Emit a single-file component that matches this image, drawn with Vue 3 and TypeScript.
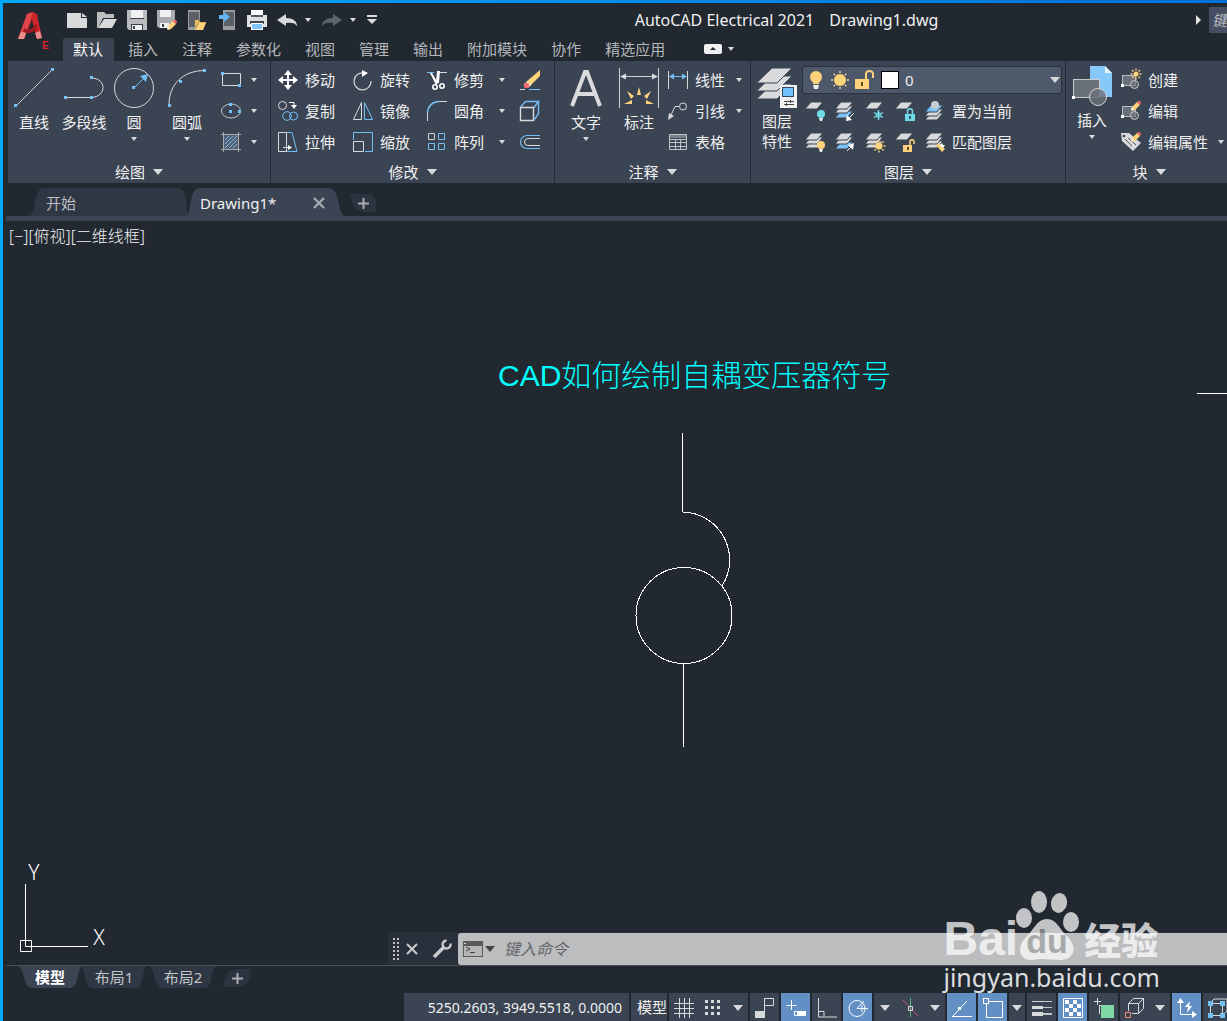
<script setup lang="ts">
import { h, ref } from 'vue'

const G = '#d9dadb'
const B = '#74bff5'
const Y = '#ffd27c'
const T = '#6fdbe6'
const P = '#3b4453'

const sheet = (y: number, fill = G) => `<path d="M6 ${y}h12l-6 7h-12z" fill="${fill}" stroke="${P}"/>`
const stack = sheet(9) + sheet(5) + sheet(1)
const line = (d: string, c = G, w = 1) => `<path d="${d}" fill="none" stroke="${c}" stroke-width="${w}"/>`
const fill = (d: string, c = G) => `<path d="${d}" fill="${c}"/>`
const dot = (x: number, y: number, c = B, s = 3) => `<rect x="${x}" y="${y}" width="${s}" height="${s}" fill="${c}"/>`
const ring = (x: number, y: number, r: number, c = G, f = 'none') => `<circle cx="${x}" cy="${y}" r="${r}" fill="${f}" stroke="${c}"/>`
const pencil = (x: number, y: number) =>
  `<g transform="translate(${x} ${y})">` + fill('M0 9l1-3 5-5 3 3-5 5-3 1z', Y) + fill('M6 1l1-1h2l1 2-1 2z', '#ee6a6a') + fill('M0 9l1-3 2 3z', '#f2f2f2') + '</g>'
const sun = (x: number, y: number, r: number, c = Y) =>
  `<g transform="translate(${x} ${y})"><circle r="${r}" fill="${c}"/>` +
  [0, 45, 90, 135, 180, 225, 270, 315].map(a => `<path d="M${r + 1} 0h2" stroke="${c}" stroke-width="1.4" transform="rotate(${a})"/>`).join('') + '</g>'
const blockShape = '<rect x="1.500" y="5.500" width="13" height="10" fill="#6a7079" stroke="#b9bbbe"/>' + '<circle cx="13.500" cy="14.500" r="4" fill="#6a7079aa" stroke="#c9cbcd"/>' + dot(0, 14, '#fff')

const icons: Record<string, [number, number, string]> = {
  file: [20, 20, fill('M0 3h14v5h6v10H0z') + fill('M15 3l5 4h-5z')],
  open: [20, 20, fill('M0 2h7l2 2h8v4H6L1 18H0z', '#bcbec0') + fill('M7 9h13l-5 9H1z')],
  save: [20, 20, fill('M0 0h20v20H2l-2-2z', '#b9bbbd') + fill('M4 0h12v8H4z', '#f0f0f0') + fill('M3 8h14v1H3zM4 14h12v6H4z', '#3a4049') + fill('M5 15h10v5H5z', '#f0f0f0') + fill('M6 16h2v3H6z', '#3a4049')],
  saveas: [20, 20, fill('M0 0h18v12l-6 6H2l-2-2z', '#a9abae') + fill('M3 0h11v7H3z', '#f0f0f0') + fill('M3 13h9v5H3z', '#f0f0f0') + fill('M5 14h2v3H5z', '#3a4049') + pencil(10, 10)],
  cloudopen: [20, 20, fill('M1 0h12v10H9v10H1z', '#9a9c9f') + fill('M2 2h10v8H8v7H2z', '#5b5f66') + fill('M8 10h4l1 2h6v1h-7l-4 6z', '#e8b860') + fill('M12 13h7l-3 7H8z', Y)],
  cloudsave: [20, 20, fill('M6 0h12v20H6z', '#9a9c9f') + fill('M7 2h10v14H7z', '#5b5f66') + fill('M2 5h5V2l6 5-6 5V9H2z', '#62b6f7')],
  print: [20, 20, fill('M4 0h12v5H4z', '#fff') + fill('M0 5h20v12H0z', '#dfe0e1') + fill('M3 11h14v3H3z', '#41464e') + fill('M4 13h12v7H4z', '#fff') + fill('M5 14h10v5H5z', '#80c4fa') + fill('M4 5h12v2H4z', '#555a61')],
  undo: [20, 20, fill('M0 10l9-6v4c7 0 11 3 11 8-2-3-5-4-11-3v3z')],
  redo: [20, 20, fill('M20 10l-9-6v4C4 8 0 11 0 16c2-3 5-4 11-3v3z', '#5e646d')],
  more: [10, 20, fill('M0 5h10v2H0zM0 9h10l-5 5z')],
  caret: [8, 6, fill('M1 1h6L4 5z')],
  wide: [10, 6, fill('M0 0h10L5 6z')],
  line: [40, 40, line('M2 38L38 2', '#cfd0d2') + dot(0, 36) + dot(37, 0)],
  pline: [40, 40, line('M2 29.500h25M27 10c16 0 16 19 0 19.500') + dot(0, 28) + dot(26, 28) + dot(26, 8)],
  circle: [40, 40, ring(20, 20, 19.5) + line('M20 20l10-10', B) + fill('M34 6l-2 8-6-6z', B) + dot(18, 18)],
  arc: [40, 40, line('M2 37C2 16 16 3 37 2.500') + dot(1, 36) + dot(12, 12) + dot(36, 1)],
  rect: [20, 20, line('M1.500 3.500h18v12h-18z') + dot(0, 2) + dot(17, 14)],
  ellipse: [20, 20, '<ellipse cx="10" cy="10" rx="9.500" ry="7" fill="none" stroke="#c9cbcd"/>' + dot(8, 2) + dot(8, 9) + dot(17, 9)],
  hatch: [20, 20, fill('M3 3h14v14H3z', '#566070') + line('M0 2.500h20M0 17.500h20M2.500 0v20M17.500 0v20', '#a9abae') + line('M4 8l4-4M4 12l8-8M4 16L16 4M8 16l8-8M12 16l4-4', B)],
  move: [20, 20, line('M10 3v14M3 10h14', '#fff', 2) + fill('M10 0l4 5H6zM10 20l4-5H6zM0 10l5-4v8zM20 10l-5-4v8z', '#fff')],
  rotate: [20, 20, line('M11 3a8.500 8.500 0 1 0 7 8', '#cfd0d2', 1.3) + fill('M9 0l6 3-6 4z', '#fff')],
  trim: [20, 20, line('M0 2.500h7', B) + line('M12 2.500h8') + fill('M3 3h2l6 10-2 2zM10 1h3l-1 12-3-1z', '#fff') + '<g fill="none" stroke="#fff" stroke-width="1.600"><circle cx="8" cy="17" r="2.200"/><circle cx="15" cy="16" r="2.200"/></g>'],
  erase: [20, 20, fill('M20 0v6L10 16l-4-4z', Y) + fill('M7 12l4 3-3 3-4-4z', '#fff') + '<circle cx="6.500" cy="15.500" r="2.800" fill="#f06a6e"/>' + line('M0 19.500h5') + line('M9 19.500h11', B)],
  copy: [20, 20, ring(4.5, 4.5, 4) + ring(9, 15, 4.3, B) + ring(15.5, 15, 4, B) + line('M11 1.500h5v3', '#fff') + fill('M13 4h6l-3 4z', '#fff')],
  mirror: [20, 20, line('M8.500 1.500v17h-8z') + line('M11.500 1.500v17h8z', B)],
  fillet: [20, 20, line('M.500 12C1 5 5 1 12 .500', B, 1.4) + line('M12 .500h8M.500 12v8')],
  box: [20, 20, line('M.500 6.500h13v13H.500z', G, 1.4) + line('M.500 6l5-5.500h13L14 6.500M18.500.500v12l-4 6', B, 1.4)],
  stretch: [20, 20, line('M.500.500h8v19h-8zM5 15.500h6') + fill('M10 13l4 2.500-4 2.500z', '#fff') + line('M9 .500h5l5 19H9', B)],
  scale: [20, 20, line('M.500 8V.500h19v19H12', B) + line('M.500 9.500h10v10H.500z')],
  array: [20, 20, line('M1.500 1.500h6v6h-6z', '#cfd0d2') + line('M11.500 1.500h6v6h-6zM1.500 11.500h6v6h-6zM11.500 11.500h6v6h-6z', B)],
  offset: [20, 20, line('M20 3.500H7a6.500 6.500 0 0 0 0 13h13', B, 1.2) + line('M20 6.500H8a3.500 3.500 0 0 0 0 7h12')],
  letter: [40, 40, line('M6 38L19 4h2l13 34M11 26h18', G, 4)],
  dim: [40, 40, line('M.500 0v40M39.500 0v40M5 8.500h30', '#cfd0d2') + fill('M1 8.500l6-3v6zM39 8.500l-6-3v6z') + fill('M18 27l2-8 2 8zM8 23l7 5-3 3zM32 23l-7 5 3 3zM13 32v4H5zM27 32v4h8z', Y)],
  linear: [20, 20, line('M.500 1v18M19.500 1v18') + line('M4 6.500h12', B) + fill('M1 6.500l5-3v6zM19 6.500l-5-3v6z', B)],
  leader: [20, 20, ring(15, 5.5, 3.5) + line('M11 5.500H7L3 14') + fill('M0 19l1-7 5 3z')],
  table: [20, 20, line('M1.500 2.500h17v15h-17zM2 7.500h16M2 10.500h16M2 14.500h16M7.500 8v10M12.500 8v10', '#c2c4c7') + fill('M2 3h16v3H2z', '#777e89')],
  layers: [40, 40, ['16', '8', '0'].map(y => `<path transform="translate(0 ${y})" d="M15 0h20L20 15H-.500z" fill="${G}" stroke="${P}"/>`).join('') + fill('M23 17h17v23H23z', '#f2f2f2') + '<rect x="25.500" y="19.500" width="11" height="9" fill="#6fc0fb" stroke="#2f4a63"/>' + line('M27 33.500h10M27 36.500h10M33.500 32v3M29.500 35v3', '#444')],
  bulb: [20, 20, '<circle cx="10" cy="7" r="6" fill="#ffd27c"/>' + fill('M7 11h6v3H7z', Y) + fill('M7 15h6l-1 4H8z', '#eee')],
  sun: [20, 20, sun(10, 10, 6)],
  unlock: [20, 20, fill('M1 9h14v10H1z', Y) + line('M12 9V4a3.500 3 0 0 1 7 0v4', Y, 2) + fill('M7 12h2v4H7z', '#5a4a2a')],
  l1: [20, 20, sheet(1) + '<circle cx="16" cy="13" r="4" fill="#6fdbe6"/>' + fill('M14 17h4l-1 3h-2z', '#eee')],
  l2: [20, 20, sheet(10, '#7cc4f7') + sheet(5) + sheet(1) + line('M19 12l-6 6', '#fff') + fill('M11 20l1-6 5 5z', '#fff')],
  l3: [20, 20, sheet(1) + line('M13.500 9v10M9 11.500l9 5M9 16.500l9-5', T, 1.4) + ring(13.5, 14, 2.5, T)],
  l4: [20, 20, sheet(1) + fill('M10 13h10v7H10z', T) + line('M12.500 13v-3c0-3 5-3 5 0v3', T, 1.5) + fill('M14 15h2v3h-2z', '#2b5a66')],
  l5: [20, 20, sheet(12) + sheet(8) + sheet(4, '#7cc4f7') + '<circle cx="10" cy="4" r="4" fill="#c9cbcd"/>'],
  l6: [20, 20, stack + '<circle cx="16" cy="13" r="4" fill="#ffd27c"/>' + fill('M14 17h4l-1 3h-2z', '#eee')],
  l7: [20, 20, sheet(10, '#7cc4f7') + sheet(5) + sheet(1) + line('M12 19l5-5', '#fff') + fill('M19 11l-1 7-5-5z', '#fff')],
  l8: [20, 20, stack + sun(14, 14, 3.5)],
  l9: [20, 20, sheet(1) + fill('M8 13h9v7H8z', Y) + line('M15 13v-3c0-3 4-3 4 0v2', Y, 1.5) + fill('M12 15h2v3h-2z', '#5a4a2a')],
  l10: [20, 20, stack + fill('M11 13l3-2 6 6-3 3z', Y) + fill('M15 13l2-2 1 2 2 0-2 3z', '#fff')],
  insert: [40, 40, fill('M18 0h15l7 7v24H18z', '#86c8fa') + fill('M33 0v7h7z', '#e6f3fd') + '<rect x="1.500" y="13.500" width="26" height="18" fill="#6a7079" stroke="#c9cbcd"/><circle cx="26" cy="31" r="8.500" fill="#6a7079cc" stroke="#d5d6d8"/>' + dot(0, 30, '#fff')],
  create: [20, 20, blockShape + sun(15, 4, 2.5)],
  edit: [20, 20, blockShape + pencil(10, 0)],
  attr: [20, 20, fill('M0 1h8l12 10-8 8L1 9z') + '<circle cx="3" cy="4" r="1.300" fill="#3b4453"/>' + line('M4 7l7 7M7 6l8 7', '#555', 1) + pencil(10, 0)],
  wrench: [20, 20, line('M2 18L12 8', '#c9cbcd', 3.6) + line('M18.500 4.500a4 4 0 1 1-4-3', '#c9cbcd', 2.4)],
  prompt: [20, 18, fill('M0 1h20v16H0z', '#5a5a5c') + fill('M1 6h18v10H1z', '#b4b5b7') + fill('M1 3h2v1H1z', '#ddd') + line('M3 7l4 2-4 2M7 12.500h5', '#444')],
  grid: [20, 20, line('M5.500 0v20M10.500 0v20M15.500 0v20M0 5.500h20M0 10.500h20M0 15.500h20')],
  dots: [20, 20, [2, 8, 14].map(y => [2, 8, 14].map(x => dot(x, y, G)).join('')).join('')],
  infer: [20, 20, line('M9.500 13V.500h9v7h-9') + fill('M0 13h10v7H0z')],
  dyn: [20, 20, line('M5.500 2v10M.500 7.500h10', '#fff') + line('M8.500 13.500h11v4h-11z', '#fff') + fill('M11 13h9v5h-9z', '#fff')],
  ortho: [20, 20, line('M1.500 0v19H20M2 13.500h5v5')],
  polar: [20, 20, ring(9, 10.5, 8, '#fff') + line('M16 3l-7 7.500h11M14 7v7', '#fff')],
  iso: [20, 20, line('M3 2l15 16', '#c65c66') + line('M10.500 0v19', '#55b57a') + line('M8.500 8.500h4v4h-4z')],
  track: [20, 20, line('M0 18.500h20M1 18L15 3', '#fff') + dot(6, 9, '#fff')],
  osnap: [20, 20, line('M3.500 3.500h16v16h-16z', '#fff') + '<rect x=".500" y=".500" width="5" height="5" fill="#628fc4" stroke="#fff"/>'],
  lwt: [20, 20, fill('M0 3h11v1H0zM0 8h11v3H0zM0 14h11v4H0z') + fill('M11 3h9v1h-9zM11 9h9v1h-9zM11 15h9v2h-9z', '#c3c5c8')],
  trans: [20, 20, line('M.500.500h19v19H.500z', '#fff') + [0, 1, 2, 3].map(r => [0, 1, 2, 3].map(c => (r + c) % 2 ? '' : dot(2 + c * 4, 2 + r * 4, '#fff', 4)).join('')).join('')],
  cycle: [20, 20, line('M3.500 0v7M0 3.500h7M5 7.500h11M5.500 7v9') + fill('M7 7h13v13H7z', '#7fd8a4')],
  cube: [20, 20, line('M3.500 13V5.500h10v10H7M3.500 5.500l5-5h10v10l-5 5M13.500 5.500l5-5') + line('M.500 14.500h5v5h-5z', '#ee8f6a')],
  ucs: [20, 20, line('M3.500 3v13.500H17', '#fff') + fill('M0 5l3.500-5L7 5zM15 13l5 3.500-5 3.500zM13 3l-5 6h3l-1 6 5-7h-3z', '#fff')],
  gizmo: [20, 20, line('M2.500 5.500h12v12h-12zM2 5l4-4h13v12l-4 4') + fill('M0 3h5v5H0zM12 3h5v5h-5zM0 15h5v5H0zM12 15h5v5h-5z', B)],
}

const Ico = (p: { n: string }) => {
  const [w, ht, body] = icons[p.n]
  return h('svg', { width: w, height: ht, viewBox: `0 0 ${w} ${ht}`, 'aria-hidden': 'true', innerHTML: body })
}
Ico.props = ['n']

const menu = ['默认', '插入', '注释', '参数化', '视图', '管理', '输出', '附加模块', '协作', '精选应用']
const quick = ['file', 'open', 'save', 'saveas', 'cloudopen', 'cloudsave', 'print']
const draw = [['line', '直线'], ['pline', '多段线'], ['circle', '圆', '1'], ['arc', '圆弧', '1']]
const shapes = ['rect', 'ellipse', 'hatch']
const modify = [
  [['move', '移动'], ['rotate', '旋转'], ['trim', '修剪', '1'], ['erase', '']],
  [['copy', '复制'], ['mirror', '镜像'], ['fillet', '圆角', '1'], ['box', '']],
  [['stretch', '拉伸'], ['scale', '缩放'], ['array', '阵列', '1'], ['offset', '']],
]
const notes = [['linear', '线性', '1'], ['leader', '引线', '1'], ['table', '表格']]
const layerRows = [
  { tools: ['l1', 'l2', 'l3', 'l4'], last: 'l5', label: '置为当前' },
  { tools: ['l6', 'l7', 'l8', 'l9'], last: 'l10', label: '匹配图层' },
]
const blocks = [['create', '创建'], ['edit', '编辑'], ['attr', '编辑属性', '1']]
const status: { items: string[]; on?: boolean; slim?: boolean }[] = [
  { items: ['grid', 'dots', 'wide'] },
  { items: ['infer'] },
  { items: ['dyn'], on: true },
  { items: ['ortho'] },
  { items: ['polar'], on: true },
  { items: ['wide', 'iso', 'wide'] },
  { items: ['track'], on: true },
  { items: ['osnap'], on: true },
  { items: ['wide'], slim: true },
  { items: ['lwt'] },
  { items: ['trans'], on: true },
  { items: ['cycle'] },
  { items: ['cube', 'wide'] },
  { items: ['ucs'], on: true },
  { items: ['gizmo'] },
]
const layer = ref('0')
const command = ref('')
const query = ref('')
</script>

<template>
  <div class="app">
    <header class="head">
      <svg class="logo" width="36" height="40" viewBox="0 0 36 40" aria-label="AutoCAD Electrical">
        <path d="M1 28L10 3l6-2 4 2 5 24-5 1-5-19-8 19z" fill="#c9252b" />
        <path d="M10 3l6-2-9 27H1z" fill="#e2474b" />
        <path d="M7 17c4 3 8 1 12-4l1 5c-4 4-8 5-14 3z" fill="#9c1a20" />
        <path d="M1 28l3-7 5 1-2 6zM20 28l-2-6 5-2 2 7z" fill="#e9918f" />
        <text x="25" y="38" class="logo-e">E</text>
      </svg>
      <div class="head-main">
        <div class="title-row">
          <div class="quick">
            <button v-for="q in quick" :key="q" :aria-label="q"><Ico :n="q" /></button>
            <button class="pair" aria-label="undo"><Ico n="undo" /><Ico n="caret" /></button>
            <button class="pair" aria-label="redo"><Ico n="redo" /><Ico n="caret" /></button>
            <button aria-label="more"><Ico n="more" /></button>
          </div>
          <div class="title"><span>AutoCAD Electrical 2021</span><span>Drawing1.dwg</span></div>
          <svg width="5" height="10" viewBox="0 0 5 10"><path d="M0 0l5 5-5 5z" fill="#e4e4e4" /></svg>
          <input v-model="query" class="search" placeholder="键入关键字或短语" aria-label="键入关键字或短语" />
        </div>
        <nav class="menu">
          <button v-for="(m, i) in menu" :key="m" :class="{ on: i === 0 }">{{ m }}</button>
          <button class="fold" aria-label="minimize"><span class="pill"><svg width="6" height="3" viewBox="0 0 6 3"><path d="M0 3l3-3 3 3z" fill="#212830" /></svg></span><Ico n="caret" /></button>
        </nav>
      </div>
    </header>

    <section class="ribbon">
      <div class="panel draw">
        <div class="body">
          <button v-for="d in draw" :key="d[0]" class="big"><Ico :n="d[0]" /><span>{{ d[1] }}</span><Ico v-if="d[2]" n="caret" /></button>
          <div class="col shapes">
            <button v-for="s in shapes" :key="s" class="small" :aria-label="s"><Ico :n="s" /><Ico class="drop" n="caret" /></button>
          </div>
        </div>
        <button class="caption">绘图<Ico n="wide" /></button>
      </div>
      <div class="panel modify">
        <div class="body col">
          <div v-for="(r, i) in modify" :key="i" class="mod-row">
            <button v-for="m in r" :key="m[0]" class="small" :aria-label="m[0]"><Ico :n="m[0]" /><span v-if="m[1]">{{ m[1] }}</span><Ico v-if="m[2]" class="drop" n="caret" /></button>
          </div>
        </div>
        <button class="caption">修改<Ico n="wide" /></button>
      </div>
      <div class="panel annotate">
        <div class="body">
          <button class="big"><Ico n="letter" /><span>文字</span><Ico n="caret" /></button>
          <button class="big"><Ico n="dim" /><span>标注</span></button>
          <div class="col">
            <button v-for="n in notes" :key="n[0]" class="small"><Ico :n="n[0]" /><span>{{ n[1] }}</span><Ico v-if="n[2]" class="drop" n="caret" /></button>
          </div>
        </div>
        <button class="caption">注释<Ico n="wide" /></button>
      </div>
      <div class="panel layers">
        <div class="body">
          <button class="big"><Ico n="layers" /><span>图层<br />特性</span></button>
          <div class="col">
            <label class="combo">
              <Ico n="bulb" /><Ico n="sun" /><Ico n="unlock" /><i class="swatch"></i>
              <select v-model="layer" aria-label="图层"><option>0</option></select>
              <Ico n="wide" />
            </label>
            <div v-for="r in layerRows" :key="r.label" class="layer-row">
              <button v-for="t in r.tools" :key="t" :aria-label="t"><Ico :n="t" /></button>
              <button class="small"><Ico :n="r.last" /><span>{{ r.label }}</span></button>
            </div>
          </div>
        </div>
        <button class="caption">图层<Ico n="wide" /></button>
      </div>
      <div class="panel block">
        <div class="body">
          <button class="big"><Ico n="insert" /><span>插入</span><Ico n="caret" /></button>
          <div class="col">
            <button v-for="b in blocks" :key="b[0]" class="small"><Ico :n="b[0]" /><span>{{ b[1] }}</span><Ico v-if="b[2]" class="drop" n="caret" /></button>
          </div>
        </div>
        <button class="caption">块<Ico n="wide" /></button>
      </div>
    </section>

    <nav class="files">
      <button class="file first">
        <svg viewBox="0 0 162 28" preserveAspectRatio="none"><path d="M0 28C10 28 4 0 16 0H150C162 0 156 28 162 28z" fill="#303744" /></svg>
        <span>开始</span>
      </button>
      <button class="file second">
        <svg viewBox="0 0 160 28" preserveAspectRatio="none"><path d="M0 28C6 28 2 0 14 0H142C156 0 150 28 160 28z" fill="#3b4453" /></svg>
        <span>Drawing1*</span>
        <svg class="x" width="12" height="12" viewBox="0 0 12 12"><path d="M1 1l10 10M11 1L1 11" stroke="#a6a9ad" stroke-width="2.400" /></svg>
      </button>
      <button class="add" aria-label="new drawing"><svg width="26" height="18" viewBox="0 0 26 18"><path d="M0 0h18q7 0 8 8v10H14Q3 18 0 0z" fill="#2d3440" /><path d="M8 9.500h11M13.500 4v11" stroke="#a9acb0" stroke-width="2" /></svg></button>
    </nav>

    <main class="canvas">
      <div class="view-label">[−][俯视][二维线框]</div>
      <h1 class="heading">CAD如何绘制自耦变压器符号</h1>
      <svg class="symbol" width="100" height="316" viewBox="0 0 100 316" fill="none" stroke="#fff" shape-rendering="crispEdges">
        <path d="M47.500 1v79M47.500 80A48 48 0 0 1 87 154M48.500 232v83" />
        <circle cx="49" cy="183.500" r="48" />
      </svg>
      <div class="cursor"></div>
      <svg class="axes" width="96" height="96" viewBox="0 0 96 96">
        <path d="M8.500 24v62.500H71M3.500 80.500h11v11h-11z" fill="none" stroke="#fff" />
        <text x="17" y="20">Y</text>
        <text x="82" y="85">X</text>
      </svg>
      <div class="command">
        <svg width="6" height="22" viewBox="0 0 6 22"><path d="M1 0v22M5 0v22" stroke="#b9bbbd" stroke-width="2" stroke-dasharray="2 2" /></svg>
        <button aria-label="close"><svg width="12" height="12" viewBox="0 0 12 12"><path d="M1 1l10 10M11 1L1 11" stroke="#c9cbcd" stroke-width="2" /></svg></button>
        <button aria-label="settings"><Ico n="wrench" /></button>
        <div class="entry">
          <Ico n="prompt" /><svg width="10" height="6" viewBox="0 0 10 6"><path d="M0 0h10L5 6z" fill="#444" /></svg>
          <input v-model="command" placeholder="键入命令" aria-label="键入命令" />
        </div>
      </div>
    </main>

    <nav class="layouts">
      <button class="lay on"><svg viewBox="0 0 68 22" preserveAspectRatio="none"><path d="M0 0C10 0 6 22 16 22H54C64 22 60 0 68 0z" fill="#3b4453" /></svg><span>模型</span></button>
      <button class="lay"><svg viewBox="0 0 68 22" preserveAspectRatio="none"><path d="M0 0C6 0 4 22 12 22H56C64 22 62 0 68 0z" fill="#2f3744" /></svg><span>布局1</span></button>
      <button class="lay"><svg viewBox="0 0 68 22" preserveAspectRatio="none"><path d="M0 0C6 0 4 22 12 22H56C64 22 62 0 68 0z" fill="#2f3744" /></svg><span>布局2</span></button>
      <button class="add" aria-label="new layout"><svg width="28" height="18" viewBox="0 0 28 18"><path d="M0 18Q2 0 14 0h14Q27 18 14 18z" fill="#2d3440" /><path d="M9 9.500h11M14.500 4v11" stroke="#a9acb0" stroke-width="2" /></svg></button>
    </nav>

    <footer class="status">
      <div class="coords">5250.2603, 3949.5518, 0.0000</div>
      <button class="space">模型</button>
      <div v-for="(s, i) in status" :key="i" class="cell" :class="{ on: s.on, slim: s.slim }">
        <button v-for="(n, k) in s.items" :key="k" :class="{ arrow: n === 'wide' }" :aria-label="n"><Ico :n="n" /></button>
      </div>
    </footer>

    <div class="mark">
      <div class="brand">
        <span class="bai">Bai</span>
        <svg width="66" height="70" viewBox="0 0 66 70">
          <g fill="#fff">
            <ellipse cx="10" cy="27" rx="8" ry="10" /><ellipse cx="25" cy="11" rx="8" ry="11" />
            <ellipse cx="45" cy="12" rx="8" ry="10" transform="rotate(12 45 12)" /><ellipse cx="57" cy="31" rx="8" ry="10" />
            <path d="M33 28c10 0 12 10 20 17 12 12 6 24-6 24-8 0-20-2-28 0C6 70 1 58 12 46c8-7 11-18 21-18z" />
          </g>
          <text x="33" y="62" class="du">du</text>
        </svg>
        <span class="jy">经验</span>
      </div>
      <div class="url">jingyan.baidu.com</div>
    </div>
  </div>
</template>

<style>
body { margin: 0; background: #212830; }
</style>

<style scoped>
.app {
  position: relative; display: flex; flex-direction: column; box-sizing: border-box; min-height: 100vh; overflow: hidden;
  padding: 3px 0 0 3px; color: #f0f0f0; font: 15px/20px "Noto Sans", "Noto Sans CJK SC", sans-serif;
  background: linear-gradient(90deg, #00a8f8, #0070d8) 0 0 / 100% 3px no-repeat, linear-gradient(#00a8ff, #00a8ff) 0 0 / 3px 100% no-repeat, #212830;
}
svg { display: block; flex: none; overflow: visible; }
button { display: flex; align-items: center; padding: 0; border: 0; background: none; color: inherit; font: inherit; white-space: nowrap; }
input, select { box-sizing: border-box; min-width: 0; margin: 0; padding: 0; border: 0; outline: 0; border-radius: 0; background: none; color: inherit; font: inherit; }

.head { display: flex; }
.logo { margin: 8px 10px 0 14px; }
.logo-e { font: bold 10px "Liberation Sans", sans-serif; fill: #d8262c; }
.head-main { flex: 1; min-width: 0; }
.title-row { display: flex; align-items: center; box-sizing: border-box; height: 35px; padding: 0 0 2px 4px; }
.quick { display: flex; align-items: center; gap: 10px; }
.quick .pair { gap: 7px; }
.title { display: flex; flex: 1; justify-content: center; gap: 15px; font-size: 16px; white-space: nowrap; }
.search { width: 18px; height: 26px; margin-left: 8px; padding-left: 3px; background: #454e62; font-style: italic; }
.search::placeholder { color: #b9bbbe; opacity: 1; }
.menu { display: flex; height: 23px; color: #b4b7bb; }
.menu button { padding: 0 12px 2px; }
.menu .on { margin: 0 2px 0 0; padding: 0 11px 2px 10px; border-radius: 2px 2px 0 0; background: #3b4453; color: #fff; }
.menu .fold { gap: 5px; padding-left: 27px; }
.pill { display: flex; align-items: center; justify-content: center; width: 18px; height: 10px; border-radius: 2px; background: #f0f0f0; }

.ribbon { display: flex; margin-left: 5px; overflow: hidden; background: #3b4453; }
.panel { display: flex; flex: none; flex-direction: column; box-sizing: border-box; border-right: 1px solid #252c37; }
.body { display: flex; padding: 3px 0 4px; }
.col { display: flex; flex-direction: column; }
.big { flex-direction: column; width: 50px; padding-top: 4px; }
.big span { margin-top: 3px; line-height: 22px; }
.big svg + span + svg { margin-top: 3px; }
.small { gap: 7px; height: 31px; }
.caption { justify-content: center; gap: 8px; height: 22px; line-height: 20px; }
.draw { width: 263px; }
.draw .body { padding-left: 1px; }
.draw .big:nth-child(4) { width: 56px; }
.shapes { margin-left: 6px; }
.shapes .small { gap: 9px; }
.modify { width: 284px; }
.modify .body { padding-left: 7px; }
.mod-row { display: grid; grid-template-columns: 75px 74px 93px 20px; }
.mod-row .drop { margin-left: 7px; }
.annotate { width: 196px; }
.annotate .body { padding-left: 6px; }
.annotate .big:nth-child(2) { width: 56px; }
.annotate .col { margin-left: 1px; }
.annotate .drop { margin-left: 3px; }
.layers { width: 315px; }
.layers .body { padding-left: 1px; }
.layers .big span { line-height: 20px; }
.combo { display: flex; align-items: center; box-sizing: border-box; width: 260px; height: 28px; margin: 2px 0 1px; padding: 0 1px 0 3px; border: 1px solid #2a313c; background: #4e586b; }
.combo svg + svg { margin-left: 4px; }
.swatch { box-sizing: border-box; width: 18px; height: 18px; margin: 0 6px 0 7px; border: 1px solid #000; background: #fff; }
.combo select { flex: 1; height: 24px; appearance: none; }
.layer-row { display: flex; align-items: center; gap: 10px; padding-left: 3px; }
.block { min-width: 166px; border: 0; }
.block .body { padding-left: 1px; }
.block .big { padding-top: 2px; }
.block .col { margin-left: 4px; }
.block .drop { margin-left: 2px; }

.files { display: flex; align-items: flex-end; height: 33px; margin-left: 3px; border-bottom: 5px solid #3b4453; }
.file { position: relative; height: 28px; padding-top: 2px; }
.file > svg:first-child, .lay > svg { position: absolute; inset: 0; width: 100%; height: 100%; }
.file span, .lay span { position: relative; }
.first { width: 162px; margin-left: 22px; padding-left: 18px; color: #b9bcc0; }
.second { width: 160px; margin-left: -4px; padding-left: 14px; justify-content: space-between; }
.file .x { position: relative; margin-right: 21px; }
.files .add { margin: 0 0 4px 4px; }

.canvas { position: relative; display: flex; flex: 1; flex-direction: column; justify-content: space-between; min-height: 540px; margin-left: 3px; border-bottom: 1px solid #4b5057; }
.view-label { margin: 5px 0 0 3px; font-size: 16px; font-weight: 300; }
.heading { position: absolute; left: 492px; top: 135px; margin: 0; color: #0ff; font: 300 30px/40px "Liberation Sans", "Noto Sans CJK SC", sans-serif; white-space: nowrap; }
.symbol { position: absolute; left: 629px; top: 211px; }
.cursor { position: absolute; right: 0; top: 172px; width: 30px; height: 1px; background: #fff; }
.axes { position: absolute; left: 11px; bottom: 9px; }
.axes text { font: 300 21px "Noto Sans", sans-serif; fill: #fff; text-anchor: middle; }
.command { display: flex; align-items: center; height: 33px; margin-left: 382px; padding-left: 5px; background: #2a303b; }
.command button { margin-left: 7px; }
.command button + button { margin-left: 14px; }
.entry { display: flex; flex: 1; align-items: center; gap: 2px; height: 32px; margin-left: 6px; padding-left: 5px; border-radius: 3px 0 0 3px; background: #bcbdbf; }
.entry input { flex: 1; margin-left: 7px; color: #333; font-style: italic; font-size: 16px; }
.entry input::placeholder { color: #66686b; opacity: 1; }

.layouts { display: flex; align-items: flex-start; height: 27px; padding-left: 13px; color: #c2c5c9; }
.lay { position: relative; justify-content: center; width: 68px; height: 22px; margin-right: 1px; }
.lay.on { margin-right: -4px; color: #fff; font-weight: bold; }
.layouts .add { margin: 3px 0 0 5px; }

.status { display: flex; gap: 2px; height: 28px; margin-left: 401px; overflow: hidden; }
.coords { box-sizing: border-box; flex: none; width: 225px; padding-right: 7px; background: #3b4453; font-size: 14px; line-height: 30px; text-align: right; }
.space { flex: none; width: 36px; justify-content: flex-end; background: #3b4453; }
.cell { display: flex; flex: none; background: #3b4453; }
.cell button { justify-content: center; width: 29px; padding-top: 2px; }
.cell .arrow { width: 21px; }
.cell.slim .arrow { width: 16px; }
.cell.on { background: #628fc4; }

.mark { position: absolute; right: 67px; bottom: 28px; }
.brand { display: flex; align-items: flex-end; color: #fff; opacity: .72; }
.brand svg { margin-left: -4px; }
.bai { font: bold 48px/44px "Liberation Sans", sans-serif; }
.du { font: bold 34px "Liberation Sans", sans-serif; fill: #a0a2a4; text-anchor: middle; }
.jy { margin-left: 4px; font: 900 37px/44px "Noto Sans CJK SC", sans-serif; }
.url { color: #dcddde; font-size: 25px; line-height: 32px; }
</style>
